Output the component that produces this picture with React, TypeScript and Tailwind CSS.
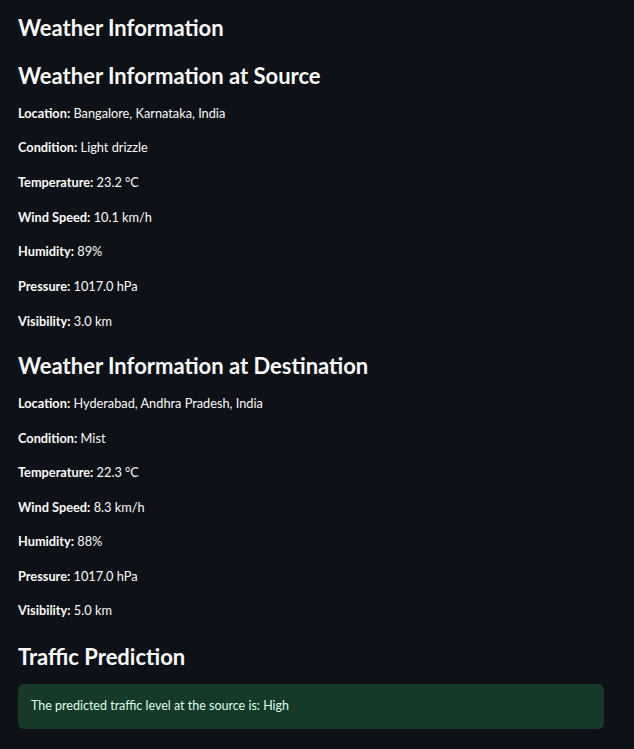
import React from 'react';

type Row = { label: string; value: string };

const source: Row[] = [
  { label: 'Location', value: 'Bangalore, Karnataka, India' },
  { label: 'Condition', value: 'Light drizzle' },
  { label: 'Temperature', value: '23.2 °C' },
  { label: 'Wind Speed', value: '10.1 km/h' },
  { label: 'Humidity', value: '89%' },
  { label: 'Pressure', value: '1017.0 hPa' },
  { label: 'Visibility', value: '3.0 km' },
];

const destination: Row[] = [
  { label: 'Location', value: 'Hyderabad, Andhra Pradesh, India' },
  { label: 'Condition', value: 'Mist' },
  { label: 'Temperature', value: '22.3 °C' },
  { label: 'Wind Speed', value: '8.3 km/h' },
  { label: 'Humidity', value: '88%' },
  { label: 'Pressure', value: '1017.0 hPa' },
  { label: 'Visibility', value: '5.0 km' },
];

const InfoRows: React.FC<{ rows: Row[]; rowClass: string }> = ({ rows, rowClass }) => (
  <div className="flex flex-col">
    {rows.map((r) => (
      <div key={r.label} className={`${rowClass} flex items-center text-[12.75px]`}>
        <span className="font-bold">{r.label}:</span>
        <span>&nbsp;{r.value}</span>
      </div>
    ))}
  </div>
);

const App: React.FC = () => {
  return (
    <div
      className="w-full min-h-screen bg-[#0e1117] text-[#fafafa] pl-[18px] pr-[30px]"
      style={{ fontFamily: 'Lato, "Noto Sans", sans-serif' }}
    >
      <div className="h-[54px] flex items-center">
        <h1 className="text-[22px] font-bold">Weather Information</h1>
      </div>
      <div className="h-[42px] flex items-center">
        <h2 className="text-[22px] font-bold">Weather Information at Source</h2>
      </div>
      <InfoRows rows={source} rowClass="h-[34.67px]" />

      <div className="h-[48px] pt-[6px] flex items-center">
        <h2 className="text-[22px] font-bold">Weather Information at Destination</h2>
      </div>
      <InfoRows rows={destination} rowClass="h-[34.5px]" />

      <div className="h-[56px] flex items-center">
        <h2 className="text-[22px] font-bold">Traffic Prediction</h2>
      </div>
      <div className="h-[45px] rounded-md bg-[#173928] text-[#dffde9] flex items-center px-[13px] text-[12.5px]">
        The predicted traffic level at the source is: High
      </div>
    </div>
  );
};

export default App;
